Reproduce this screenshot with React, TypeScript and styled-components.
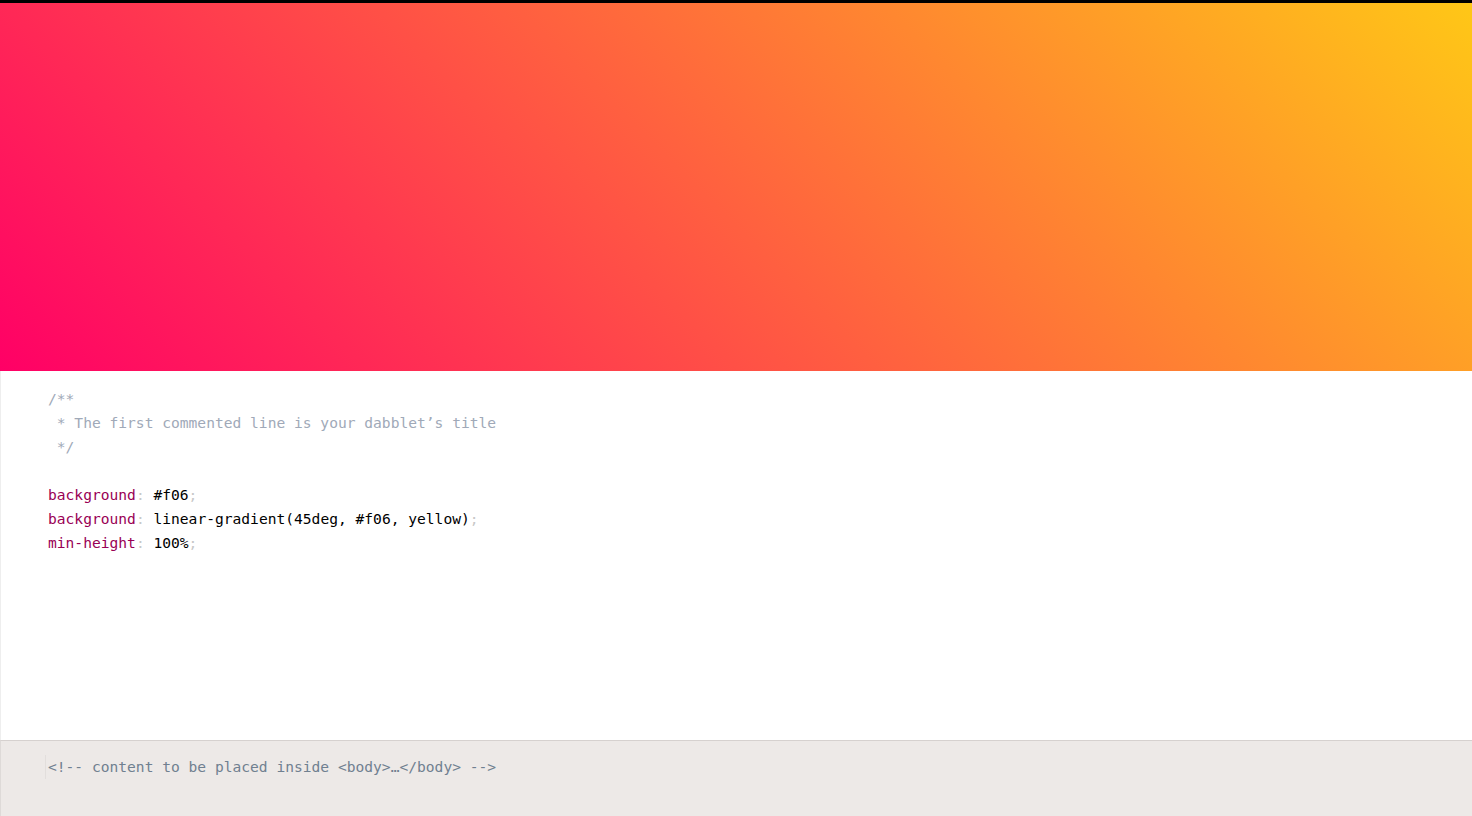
import styled, { createGlobalStyle } from 'styled-components';

const GlobalStyle = createGlobalStyle`
  *, *::before, *::after {
    box-sizing: border-box;
  }

  html, body {
    margin: 0;
    padding: 0;
    height: 100%;
    overflow: hidden;
    background: #fff;
  }

  #root {
    height: 100%;
  }
`;

const App = () => {
  return (
    <>
      <GlobalStyle />
      <PageWrapper>
        <TopBar />
        <Preview />
        <CssEditor>
          <Code>
            <Line>
              <Comment>/**</Comment>
            </Line>
            <Line>
              <Comment> * The first commented line is your dabblet’s title</Comment>
            </Line>
            <Line>
              <Comment> */</Comment>
            </Line>
            <Line>{' '}</Line>
            <Line>
              <Property>background</Property>
              <Punctuation>:</Punctuation> #f06<Punctuation>;</Punctuation>
            </Line>
            <Line>
              <Property>background</Property>
              <Punctuation>:</Punctuation> linear-gradient(45deg, #f06, yellow)
              <Punctuation>;</Punctuation>
            </Line>
            <Line>
              <Property>min-height</Property>
              <Punctuation>:</Punctuation> 100%<Punctuation>;</Punctuation>
            </Line>
          </Code>
        </CssEditor>
        <HtmlEditor>
          <HtmlLine>{'<!-- content to be placed inside <body>…</body> -->'}</HtmlLine>
        </HtmlEditor>
      </PageWrapper>
    </>
  );
};

const PageWrapper = styled.div`
  height: 816px;
  display: flex;
  flex-direction: column;
`;

const TopBar = styled.div`
  height: 3px;
  background: #000;
  flex-shrink: 0;
`;

// the preview page is wider than the visible strip, so the gradient
// never reaches pure yellow on screen
const Preview = styled.div`
  height: 368px;
  flex-shrink: 0;
  background-color: #f06;
  background-image: linear-gradient(45deg, #f06, yellow);
  background-size: 1991px 100%;
  background-position: left top;
  background-repeat: no-repeat;
`;

const CssEditor = styled.div`
  flex: 1;
  background: #fff;
  border-left: 1px solid #eeeeee;
  padding: 16px 0 0 47px;
`;

const Code = styled.pre`
  margin: 0;
  font-family: 'DejaVu Sans Mono', 'Liberation Mono', monospace;
  font-size: 14.6px;
  line-height: 24px;
  color: #000;
`;

const Line = styled.div`
  white-space: pre;
  height: 24px;
`;

const Comment = styled.span`
  color: #a0a9b8;
`;

const Property = styled.span`
  color: #905;
`;

const Punctuation = styled.span`
  color: #c8c8c8;
`;

const HtmlEditor = styled.div`
  height: 76px;
  flex-shrink: 0;
  background: #ede9e7;
  border-top: 1px solid #d6d1cf;
  border-left: 1px solid #dedad8;
  padding: 14px 0 0 44px;
`;

const HtmlLine = styled.div`
  font-family: 'DejaVu Sans Mono', 'Liberation Mono', monospace;
  font-size: 14.6px;
  line-height: 24px;
  color: #708090;
  white-space: pre;
  padding-left: 2px;
  border-left: 1px solid #e2dedc;
`;

export default App;
